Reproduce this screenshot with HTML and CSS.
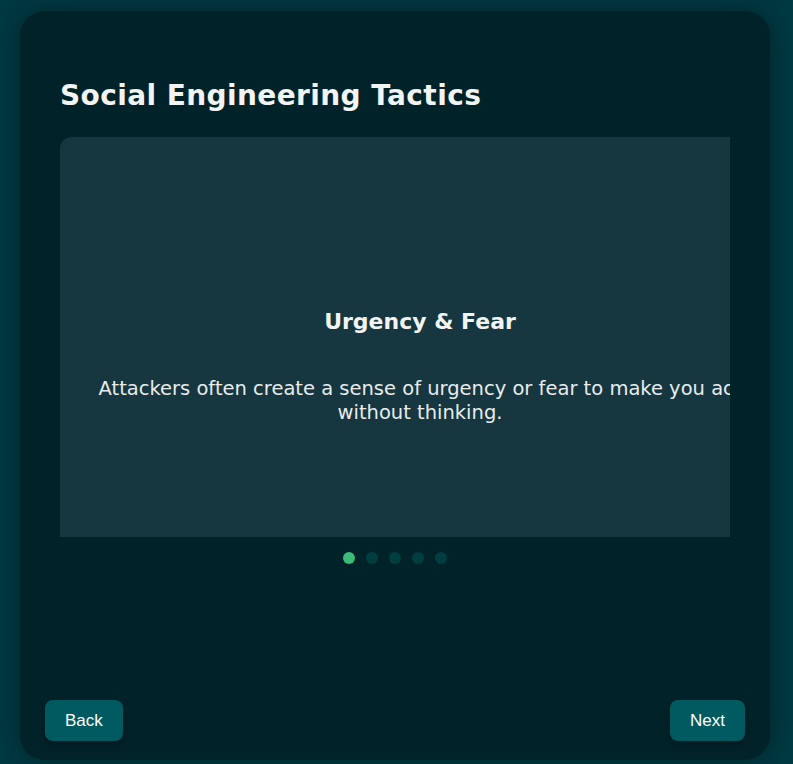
FILE: index.html
```html
<!DOCTYPE html>
<html lang="en">
<head>
<meta charset="utf-8">
<title>Social Engineering Tactics</title>
<link rel="stylesheet" href="styles.css">
</head>
<body>
  <main class="card">
    <h1 class="title">Social Engineering Tactics</h1>
    <div class="carousel">
      <div class="slide">
        <h2 class="slide-title">Urgency &amp; Fear</h2>
        <p class="slide-text">Attackers often create a sense of urgency or fear to make you act without thinking.</p>
      </div>
    </div>
    <div class="dots">
      <span class="dot active"></span>
      <span class="dot"></span>
      <span class="dot"></span>
      <span class="dot"></span>
      <span class="dot"></span>
    </div>
    <div class="footer">
      <button class="btn">Back</button>
      <button class="btn">Next</button>
    </div>
  </main>
</body>
</html>
```
FILE: styles.css
```css
html, body {
  margin: 0;
  padding: 0;
}
body {
  background: #003a42;
  width: 793px;
  height: 764px;
  overflow: hidden;
  font-family: "DejaVu Sans", "Liberation Sans", sans-serif;
}
.card {
  box-sizing: border-box;
  margin: 11px 0 0 20px;
  width: 750px;
  height: 749px;
  background: #002329;
  border-radius: 25px;
  box-shadow: 0 0 28px rgba(0, 10, 14, 0.45);
  padding: 40px 40px 19px;
  display: flex;
  flex-direction: column;
}
.title {
  margin: 27px 0 23px;
  color: #f2f4f4;
  font-size: 28px;
  letter-spacing: 0.4px;
  font-weight: bold;
  line-height: 36px;
}
.carousel {
  width: 670px;
  overflow: hidden;
  border-radius: 12px 0 0 0;
}
.slide {
  box-sizing: border-box;
  width: 720px;
  height: 400px;
  background: #163640;
  padding: 67px 30px 0;
  display: flex;
  flex-direction: column;
  align-items: center;
  justify-content: center;
  text-align: center;
  color: #f2f4f4;
}
.slide-title {
  margin: 0 0 41px;
  font-size: 22px;
  font-weight: bold;
  line-height: 28px;
}
.slide-text {
  margin: 0 0 8px;
  font-size: 19.5px;
  line-height: 24px;
  color: #e8ecec;
}
.dots {
  display: flex;
  justify-content: center;
  gap: 11px;
  margin-top: 15px;
}
.dot {
  width: 12px;
  height: 12px;
  border-radius: 50%;
  background: #013e42;
}
.dot.active {
  background: #3dba78;
}
.footer {
  margin: auto -15px 0;
  display: flex;
  justify-content: space-between;
}
.btn {
  font-family: "Liberation Sans", Arial, sans-serif;
  font-size: 17px;
  line-height: 19px;
  color: #ffffff;
  background: #005a60;
  border: none;
  border-radius: 8px;
  padding: 11px 20px;
  box-shadow: 0 4px 10px rgba(0, 0, 0, 0.25);
}
```
